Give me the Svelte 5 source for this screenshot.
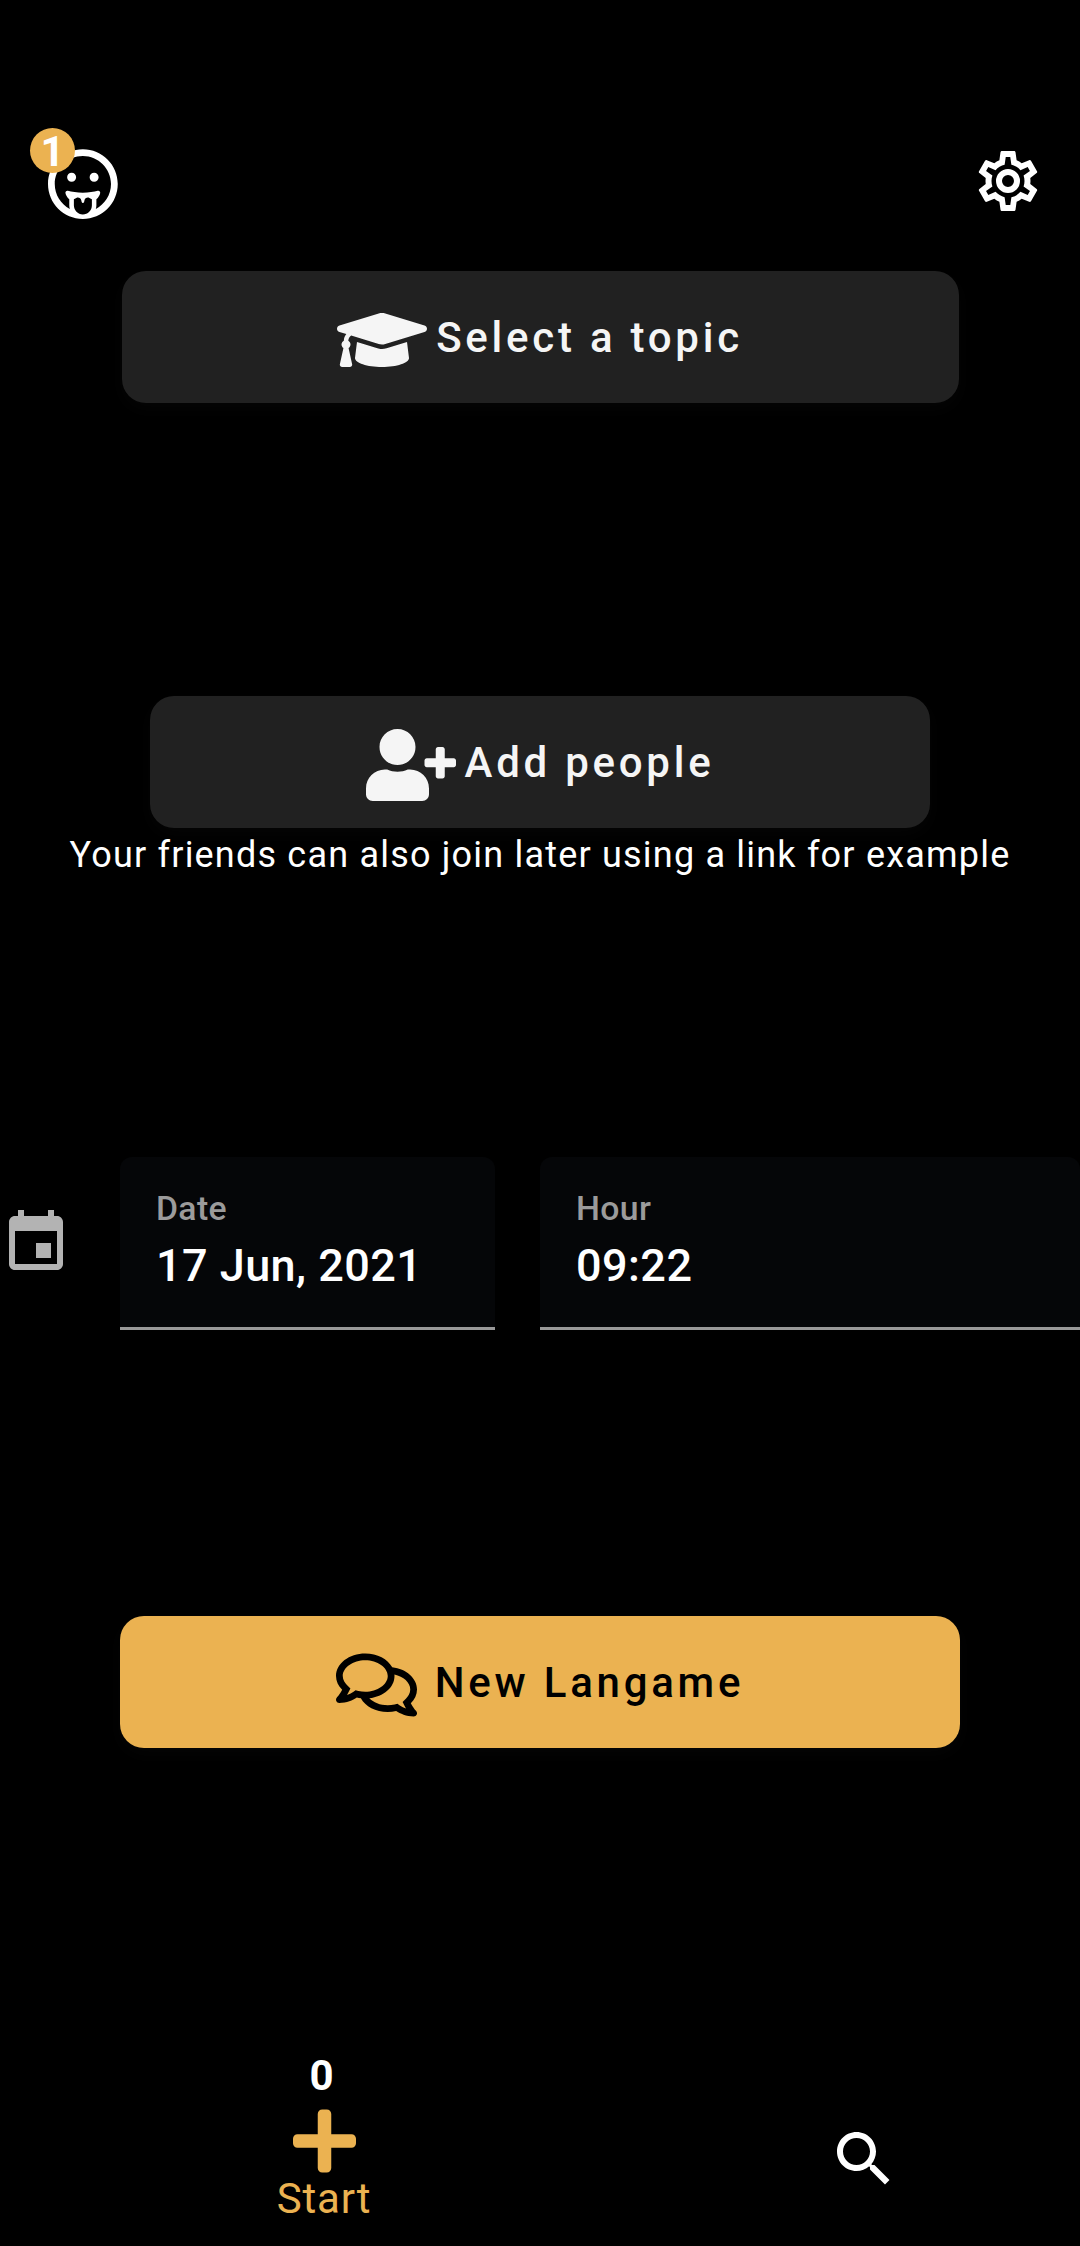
<script>
  const fields = [
    { label: 'Date', value: '17 Jun, 2021', wide: false },
    { label: 'Hour', value: '09:22', wide: true },
  ];
  const unread = 1;
  const started = 0;
</script>

<main class="screen">
  <header class="top">
    <div class="profile">
      <svg class="face" viewBox="0 0 496 512" aria-hidden="true">
        <path d="M248 8C111 8 0 119 0 256s111 248 248 248 248-111 248-248S385 8 248 8zm64 400c0 35.6-29.1 64.5-64.9 64-35.1-.5-63.1-29.8-63.1-65v-42.8l17.7-8.8c15-7.5 31.5 1.7 34.9 16.5l2.8 12.1c2.1 9.2 15.2 9.2 17.3 0l2.8-12.1c3.4-14.8 19.8-24.1 34.9-16.5l17.7 8.8V408zm28.2 25.3c2.2-8.1 3.8-16.5 3.8-25.3v-43.5c14.2-12.4 24.4-27.5 27.3-44.5 1.7-10.1-7.7-18.5-17.7-15.3-26 8.3-64.4 13.2-106 13.2s-79.9-4.9-105.9-13.1c-9.9-3.1-19.4 5.3-17.7 15.3 2.9 17 13.1 32.1 27.3 44.5V408c0 8.8 1.6 17.2 3.8 25.3C91.8 399.9 48 333 48 256c0-110.5 89.5-200 200-200s200 89.5 200 200c0 77-43.8 143.9-107.8 177.3zM168 176c-17.7 0-32 14.3-32 32s14.3 32 32 32 32-14.3 32-32-14.3-32-32-32zm160 0c-17.7 0-32 14.3-32 32s14.3 32 32 32 32-14.3 32-32-14.3-32-32-32z" />
      </svg>
      <span class="badge">{unread}</span>
    </div>
    <svg class="icon24" viewBox="0 0 24 24" aria-hidden="true">
      <path d="M12,8A4,4 0 0,1 16,12A4,4 0 0,1 12,16A4,4 0 0,1 8,12A4,4 0 0,1 12,8M12,10A2,2 0 0,0 10,12A2,2 0 0,0 12,14A2,2 0 0,0 14,12A2,2 0 0,0 12,10M10,22C9.75,22 9.54,21.82 9.5,21.58L9.13,18.93C8.5,18.68 7.96,18.34 7.44,17.94L4.95,18.95C4.73,19.03 4.46,18.95 4.34,18.73L2.34,15.27C2.21,15.05 2.27,14.78 2.46,14.63L4.57,12.97L4.5,12L4.57,11L2.46,9.37C2.27,9.22 2.21,8.95 2.34,8.73L4.34,5.27C4.46,5.05 4.73,4.96 4.95,5.05L7.44,6.05C7.96,5.66 8.5,5.32 9.13,5.07L9.5,2.42C9.54,2.18 9.75,2 10,2H14C14.25,2 14.46,2.18 14.5,2.42L14.87,5.07C15.5,5.32 16.04,5.66 16.56,6.05L19.05,5.05C19.27,4.96 19.54,5.05 19.66,5.27L21.66,8.73C21.79,8.95 21.73,9.22 21.54,9.37L19.43,11L19.5,12L19.43,13L21.54,14.63C21.73,14.78 21.79,15.05 21.66,15.27L19.66,18.73C19.54,18.95 19.27,19.04 19.05,18.95L16.56,17.95C16.04,18.34 15.5,18.68 14.87,18.93L14.5,21.58C14.46,21.82 14.25,22 14,22H10M11.25,4L10.88,6.61C9.68,6.86 8.62,7.5 7.85,8.39L5.44,7.35L4.69,8.65L6.8,10.2C6.4,11.37 6.4,12.64 6.8,13.8L4.68,15.36L5.43,16.66L7.86,15.62C8.63,16.5 9.68,17.14 10.87,17.38L11.24,20H12.76L13.13,17.39C14.32,17.14 15.37,16.5 16.14,15.62L18.57,16.66L19.32,15.36L17.2,13.81C17.6,12.64 17.6,11.37 17.2,10.2L19.31,8.65L18.56,7.35L16.15,8.39C15.38,7.5 14.32,6.86 13.12,6.62L12.75,4H11.25Z" />
    </svg>
  </header>

  <button class="btn topic">
    <svg class="glyph" viewBox="0 0 640 512" aria-hidden="true">
      <path d="M622.34 153.2L343.4 67.5c-15.2-4.67-31.6-4.67-46.79 0L17.66 153.2c-23.54 7.23-23.54 38.36 0 45.59l48.63 14.94c-10.67 13.19-17.23 29.28-17.88 46.9C38.78 266.15 32 276.11 32 288c0 10.78 5.68 19.85 13.86 25.65L20.33 428.53C18.11 438.52 25.71 448 35.94 448h56.11c10.24 0 17.84-9.48 15.62-19.47L82.14 313.65C90.32 307.85 96 298.78 96 288c0-11.57-6.47-21.25-15.66-26.87.76-15.02 8.44-28.3 20.69-36.72L296.6 284.5c9.06 2.78 26.44 6.25 46.79 0l278.95-85.7c23.55-7.24 23.55-38.36 0-45.6zM352.79 315.09c-28.53 8.76-52.84 3.92-65.59 0l-145.02-44.55L128 384c0 35.35 85.96 64 192 64s192-28.65 192-64l-14.18-113.47-145.03 44.56z" />
    </svg>
    <span>Select a topic</span>
  </button>

  <button class="btn people">
    <svg class="glyph" viewBox="0 0 640 512" aria-hidden="true">
      <path d="M624 208h-64v-64c0-8.8-7.2-16-16-16h-32c-8.8 0-16 7.2-16 16v64h-64c-8.8 0-16 7.2-16 16v32c0 8.8 7.2 16 16 16h64v64c0 8.8 7.2 16 16 16h32c8.8 0 16-7.2 16-16v-64h64c8.8 0 16-7.2 16-16v-32c0-8.8-7.2-16-16-16zm-400 48c70.7 0 128-57.3 128-128S294.7 0 224 0 96 57.3 96 128s57.3 128 128 128zm89.6 32h-16.7c-22.2 10.2-46.9 16-72.9 16s-50.6-5.8-72.9-16h-16.7C60.2 288 0 348.2 0 422.4V464c0 26.5 21.5 48 48 48h352c26.5 0 48-21.5 48-48v-41.6c0-74.2-60.2-134.4-134.4-134.4z" />
    </svg>
    <span>Add people</span>
  </button>
  <p class="hint">Your friends can also join later using a link for example</p>

  <section class="schedule">
    <svg class="icon24 calendar" viewBox="0 0 24 24" aria-hidden="true">
      <path d="M17 12h-5v5h5v-5zM16 1v2H8V1H6v2H5c-1.11 0-1.99.9-1.99 2L3 19c0 1.1.89 2 2 2h14c1.1 0 2-.9 2-2V5c0-1.1-.9-2-2-2h-1V1h-2zm3 18H5V8h14v11z" />
    </svg>
    {#each fields as field}
      <div class="field" class:wide={field.wide}>
        <span class="label">{field.label}</span>
        <span class="value">{field.value}</span>
      </div>
    {/each}
  </section>

  <button class="btn create">
    <svg class="glyph" viewBox="0 0 640 512" aria-hidden="true">
      <path d="M532 386.2c27.5-27.1 44-61.1 44-98.2 0-80-76.5-146.1-176.2-157.9C368.3 72.5 294.3 32 208 32 93.1 32 0 103.6 0 192c0 37 16.5 71 44 98.2-15.3 30.7-37.3 54.5-37.7 54.9-6.3 6.7-8.1 16.5-4.4 25 3.6 8.5 12 14 21.2 14 53.5 0 96.7-20.2 125.2-38.8 9.2 2.1 18.7 3.7 28.4 4.9C208.1 407.6 281.8 448 368 448c20.8 0 40.8-2.4 59.8-6.8C456.3 459.7 499.4 480 553 480c9.2 0 17.5-5.5 21.2-14 3.6-8.5 1.9-18.3-4.4-25-.4-.3-22.5-24.1-37.8-54.8zm-392.8-92.3L122.1 305c-14.1 9.1-28.5 16.3-43.1 21.4 2.7-4.7 5.4-9.7 8-14.8l15.5-31.1L77.7 256C64.2 242.6 48 220.7 48 192c0-60.7 73.3-112 160-112s160 51.3 160 112-73.3 112-160 112c-16.5 0-33-1.9-49-5.6l-19.8-4.5zM498.3 352l-24.7 24.4 15.5 31.1c2.6 5.1 5.3 10.1 8 14.8-14.6-5.1-29-12.3-43.1-21.4l-17.1-11.1-19.9 4.6c-16 3.7-32.5 5.6-49 5.6-54 0-102.2-20.1-131.3-49.7C338 339.5 416 272.9 416 192c0-3.4-.4-6.7-.7-10C479.7 196.5 528 238.8 528 288c0 28.7-16.2 50.6-29.7 64z" />
    </svg>
    <span>New Langame</span>
  </button>

  <nav class="tabs">
    <div class="tab start">
      <span class="count">{started}</span>
      <svg class="plus" viewBox="0 0 448 512" aria-hidden="true">
        <path d="M416 208H272V64c0-17.67-14.33-32-32-32h-32c-17.67 0-32 14.33-32 32v144H32c-17.67 0-32 14.33-32 32v32c0 17.67 14.33 32 32 32h144v144c0 17.67 14.33 32 32 32h32c17.67 0 32-14.33 32-32V304h144c17.67 0 32-14.33 32-32v-32c0-17.67-14.33-32-32-32z" />
      </svg>
      <span class="name">Start</span>
    </div>
    <div class="tab search">
      <svg class="icon24" viewBox="0 0 24 24" aria-hidden="true">
        <path d="M15.5 14h-.79l-.28-.27C15.41 12.59 16 11.11 16 9.5 16 5.91 13.09 3 9.5 3S3 5.91 3 9.5 5.91 16 9.5 16c1.61 0 3.09-.59 4.23-1.57l.27.28v.79l5 4.99L20.49 19l-4.99-5zm-6 0C7.01 14 5 11.99 5 9.5S7.01 5 9.5 5 14 7.01 14 9.5 11.99 14 9.5 14z" />
      </svg>
    </div>
  </nav>
</main>

<style>
  :global(body) {
    margin: 0;
    background: #000;
  }
  .screen {
    box-sizing: border-box;
    width: 1080px;
    height: 2246px;
    padding-top: 145px;
    overflow: hidden;
    display: flex;
    flex-direction: column;
    align-items: center;
    background: #000;
    color: #fff;
    font-family: Roboto, sans-serif;
  }
  svg {
    display: block;
    flex: none;
    fill: currentColor;
  }
  .icon24 {
    width: 72px;
    height: 72px;
  }
  .top {
    box-sizing: border-box;
    width: 100%;
    height: 72px;
    padding: 0 36px 0 48px;
    display: flex;
    justify-content: space-between;
  }
  .profile {
    position: relative;
    padding-top: 3px;
  }
  .face {
    width: 69.75px;
    height: 72px;
  }
  .badge {
    position: absolute;
    top: -17px;
    left: -18px;
    width: 45px;
    height: 45px;
    border-radius: 50%;
    background: #ebb251;
    font-size: 42px;
    font-weight: 700;
    line-height: 48px;
    text-align: center;
  }
  .btn {
    flex: none;
    height: 132px;
    padding: 0;
    border: 0;
    border-radius: 24px;
    display: flex;
    align-items: center;
    justify-content: center;
    gap: 9px;
    background: #212121;
    color: #f5f5f5;
    font-family: inherit;
    font-size: 42px;
    font-weight: 500;
    letter-spacing: 3.75px;
    white-space: nowrap;
    box-shadow: 0 6px 18px rgba(255, 255, 255, 0.018);
  }
  .glyph {
    width: 90px;
    height: 72px;
    margin-top: 6px;
  }
  .topic {
    width: 837px;
    margin-top: 54px;
  }
  .people {
    width: 780px;
    margin-top: 293px;
  }
  .create {
    width: 840px;
    margin-top: 285px;
    background: #ebb251;
    color: #000;
  }
  .hint {
    margin: 0;
    font-size: 36px;
    line-height: 54px;
    letter-spacing: 1.2px;
    white-space: nowrap;
  }
  .schedule {
    width: 100%;
    height: 174px;
    margin-top: 275px;
    display: flex;
  }
  .calendar {
    margin: 50px 48px 0 0;
    color: #b3b3b3;
  }
  .field {
    box-sizing: border-box;
    width: 375px;
    height: 173px;
    padding: 32px 36px 0;
    display: flex;
    flex-direction: column;
    gap: 10px;
    border-bottom: 3px solid #999;
    border-radius: 12px 12px 0 0;
    background: #050608;
    font-weight: 500;
    white-space: nowrap;
  }
  .field.wide {
    flex: 1;
    margin-left: 45px;
  }
  .label {
    font-size: 33.75px;
    line-height: 40px;
    letter-spacing: 0.34px;
    color: #9b9b9b;
  }
  .value {
    font-size: 45px;
    line-height: 54px;
    letter-spacing: 0.45px;
  }
  .tabs {
    width: 100%;
    margin-top: 304px;
    display: flex;
  }
  .tab {
    display: flex;
    flex-direction: column;
    align-items: center;
  }
  .start {
    width: 648px;
    color: #ebb251;
  }
  .search {
    width: 432px;
    padding-top: 71px;
  }
  .count {
    margin-right: 5px;
    color: #fff;
    font-size: 42px;
    font-weight: 700;
    line-height: 48px;
  }
  .plus {
    width: 63px;
    height: 72px;
    margin-top: 5px;
  }
  .name {
    margin-top: 1px;
    font-size: 42px;
    line-height: 42px;
    letter-spacing: 0.75px;
  }
</style>
